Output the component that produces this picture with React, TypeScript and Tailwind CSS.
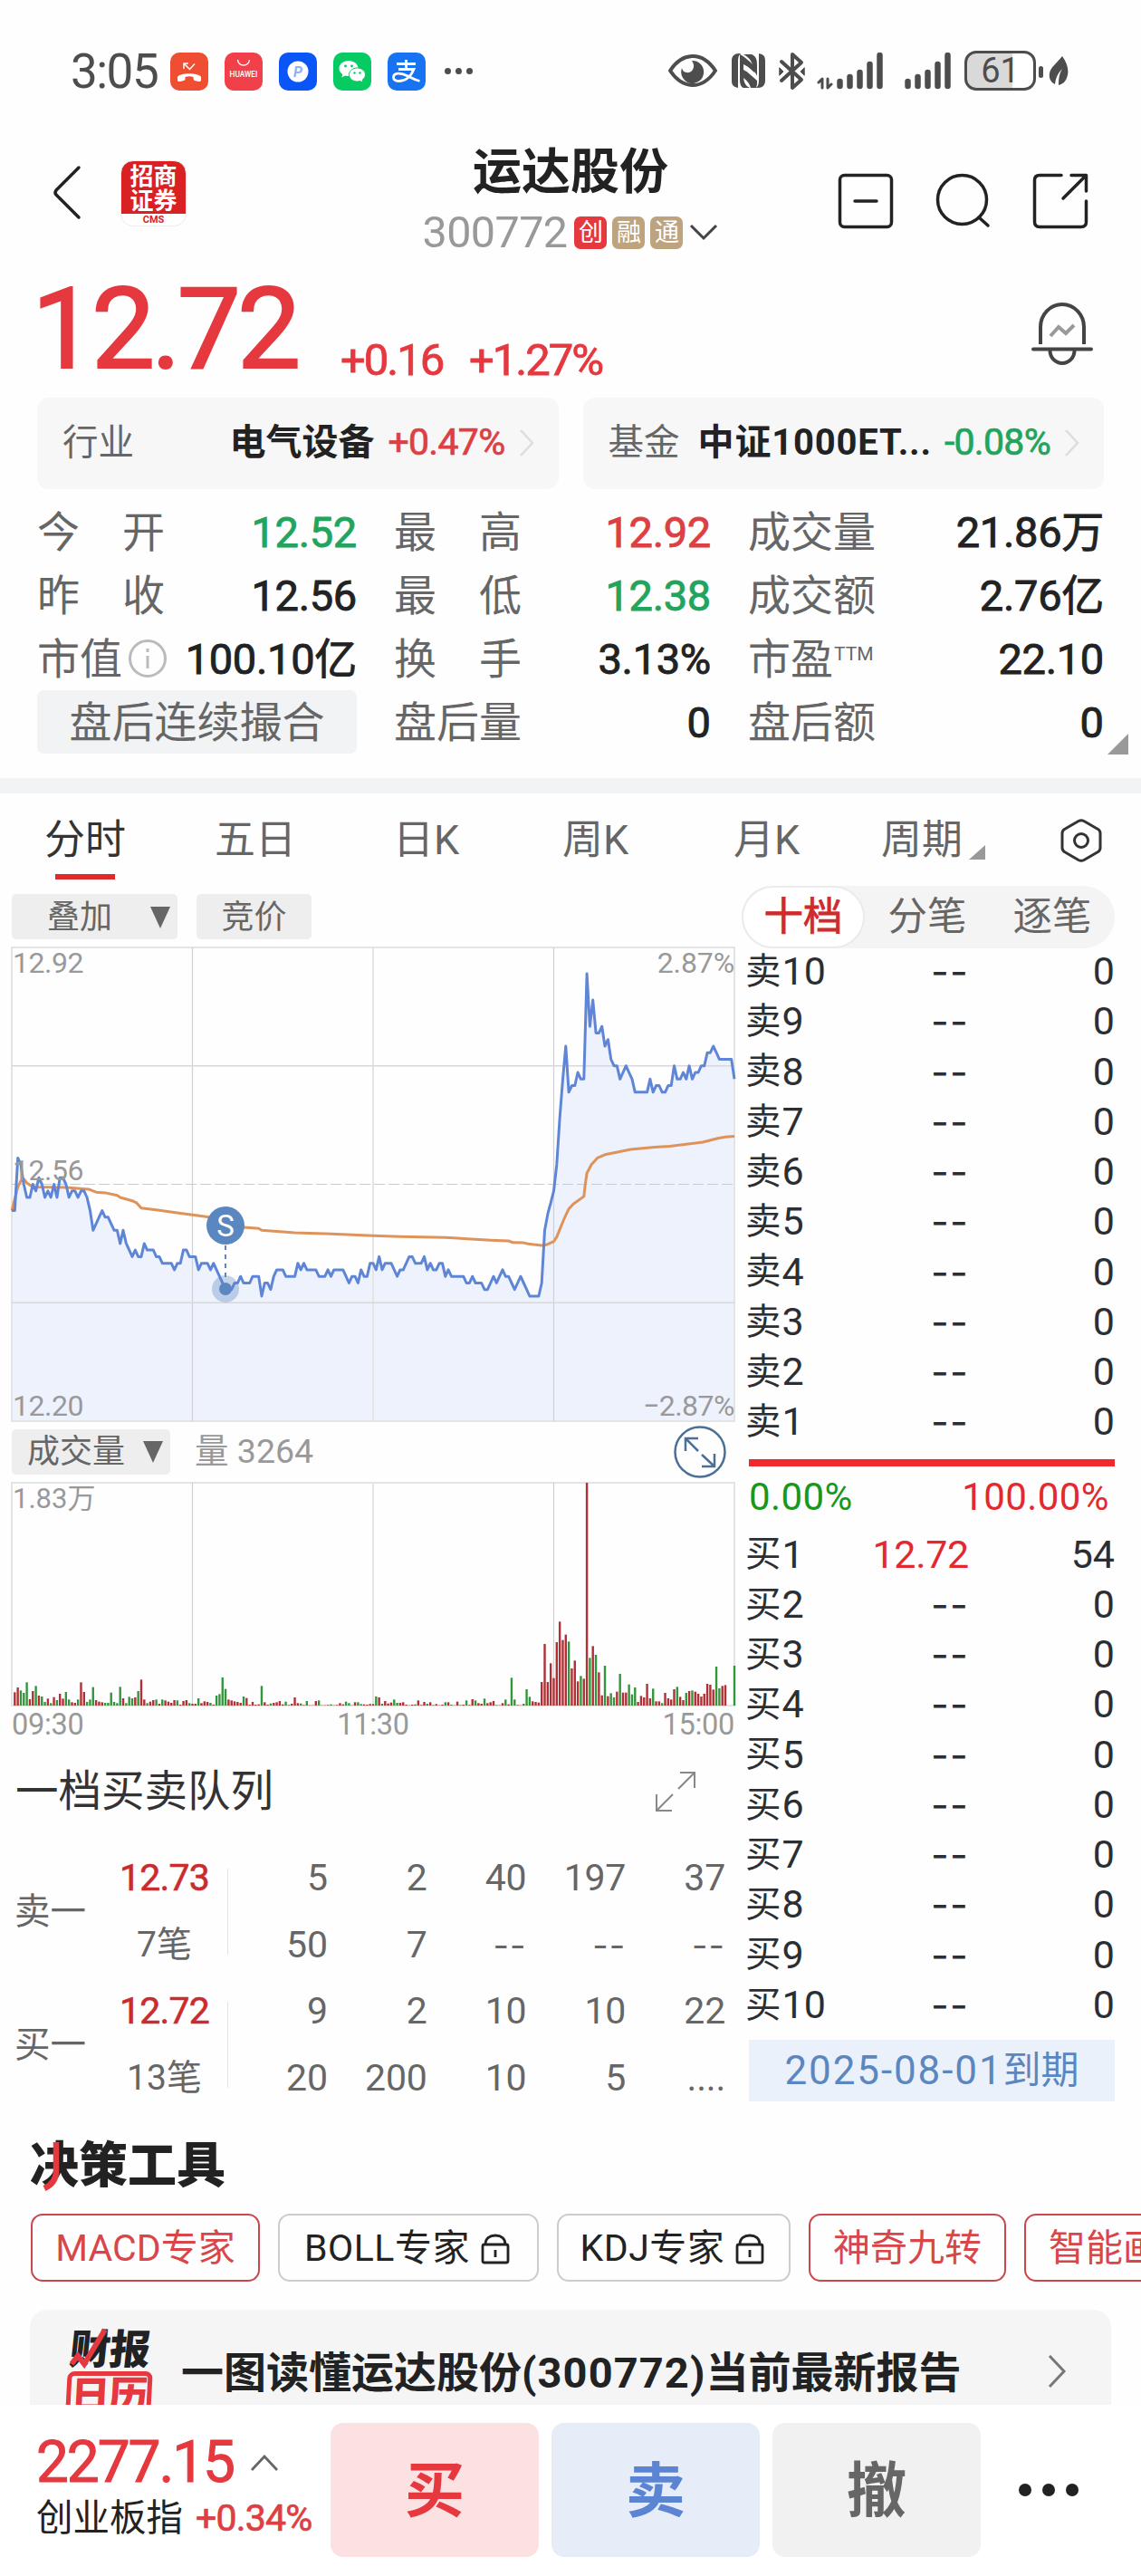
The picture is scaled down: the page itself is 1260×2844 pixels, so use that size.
import type { ReactNode } from 'react'
import clsx from 'clsx'

const TICK = 7.264
const STEP = 798 / 240
const MID = 261.5

// minute prices, in cents away from the previous close (12.56)
const prices = [
  -4, -4, 4, 3, 0, -2, -2, 0, -1, 1, 0, -2, -1, -2, 0, -2, 1, 1, 0, -2,
  -1, -1, -2, -1, -1, -2, -4, -7, -6, -5, -4, -5, -5, -6, -7, -7, -9, -7, -9, -10,
  -11, -10, -11, -11, -9, -10, -10, -10, -11, -11, -12, -12, -12, -12, -13, -12, -12, -10, -10, -11,
  -11, -11, -13, -12, -12, -12, -13, -12, -13, -14, -15, -16, -16, -16, -15, -15, -14, -15, -15, -15,
  -14, -14, -14, -17, -15, -15, -16, -14, -13, -13, -13, -14, -14, -14, -14, -12, -13, -12, -13, -13,
  -13, -13, -14, -14, -14, -13, -14, -13, -13, -13, -13, -14, -15, -14, -14, -15, -13, -14, -14, -12,
  -12, -13, -11, -13, -12, -12, -12, -13, -14, -13, -13, -12, -11, -11, -12, -12, -12, -11, -13, -12,
  -13, -13, -12, -12, -14, -13, -14, -14, -14, -14, -14, -15, -15, -14, -15, -15, -15, -16, -16, -15,
  -14, -15, -14, -13, -14, -14, -15, -16, -15, -14, -15, -16, -17, -17, -17, -17, -15, -7, -4.5, -2.8,
  -1, 3, 10, 16, 21, 14, 15, 15, 17, 16, 16, 32, 24, 28, 23, 23, 24, 21, 22, 19,
  18, 18, 16, 17, 18, 17, 16, 14, 14, 14, 14, 14, 16, 14, 15, 15, 14, 14, 15, 15,
  18, 16, 16, 17, 16, 18, 16, 17, 17, 18, 18, 20, 20, 21, 20, 19, 19, 19, 19, 19,
  16,
]

// [minute, cents] of the running average
const average: [number, number][] = [
  [0, -4], [2, -0.4], [3, 0.5], [4, 0.8], [5, 0.2], [7, -0.4], [18, -0.5], [25.5, -0.75], [28, -1.2],
  [31, -1.3], [35, -1.7], [36, -2], [40, -2.5], [41.5, -2.85], [43, -3.6], [48, -3.9], [56, -4.4],
  [60, -4.65], [65, -4.95], [77, -6.55], [82, -6.7], [83, -7], [94, -7.35], [106, -7.55], [120, -7.8],
  [129, -7.95], [144, -8.1], [159, -8.5], [165, -8.6], [166.5, -8.85], [170, -8.9], [171.5, -9.05],
  [176, -9.3], [177.5, -9.2], [180, -8.7], [181, -8], [183.5, -5.2], [185, -3.75], [186.5, -3],
  [190, -1.85], [190.4, -0.2], [191, 1.7], [192.5, 3], [194.5, 4], [197, 4.5], [205.5, 5.3],
  [213.5, 5.65], [218.5, 5.8], [229.5, 6.4], [234.5, 7], [237, 7.2], [240, 7.3],
]

// volume per minute: positive is an up minute, negative a down minute
const volumes = [
  44, 60, -50, -42, -77, 21, 48, -65, 33, -30, -12, 23, -8, 28, -18, 39, 23, -45, -20, 11,
  9, -20, 77, 45, -12, -20, -61, 18, 13, 11, -9, -9, -43, -12, -8, -62, 24, -8, -29, -24,
  27, -48, 86, 20, -8, 13, 18, -20, 6, -20, 17, 13, 9, 18, -17, 3, 15, 18, -8, 6,
  6, -24, 8, 14, 12, -9, 3, -33, -38, -93, -55, 20, 17, 14, 12, 9, -30, 25, 3, 12,
  3, 4, -65, 11, 3, -7, 9, 11, 15, 4, -13, 2, 6, 27, 8, -7, 2, -15, 1, 1,
  15, -17, 1, 1, 2, -4, 1, 2, 8, 4, -13, -8, 1, 11, -11, -5, 4, 3, 5, 5,
  -30, 27, -6, 15, 7, 10, -20, -9, 9, 11, 3, 1, 3, -4, 17, 2, 12, -6, 11, -2,
  5, 1, 3, -11, 11, -3, 1, 13, -2, 3, -17, 2, 21, -17, 8, 6, -23, 8, 11, 15,
  -2, 1, 8, -20, 4, -92, -20, 2, 1, -6, -54, -29, 14, 12, 10, 78, 204, 78, 140, 91,
  210, 278, 217, 235, -212, 123, 149, 80, -98, 89, 738, -158, 197, -168, 110, 34, -132, 31, -41, -27,
  46, -105, 43, 43, -70, -37, -60, 12, 32, 27, 72, 24, -56, 14, 14, -8, 42, 24, 20, 54,
  -62, 29, 18, -42, 48, -50, 46, 39, 30, 39, 72, 69, 53, -129, -57, 65, 68, 0, 0, -132,
]

const px = (m: number) => (m * STEP).toFixed(1)
const py = (c: number) => (MID - c * TICK).toFixed(1)

const priceLine = prices.map((c, m) => `${px(m)},${py(c)}`).join(' ')
const averageLine = average.map(([m, c]) => `${px(m)},${py(c)}`).join(' ')

function StatusBar() {
  return (
    <div className="flex h-[142px] items-start pt-[58px] text-[#4d4d4d]">
      <div className="ml-[78px] w-[110px] text-[53px] leading-[43px] tracking-[-1.500px]">3:05</div>
      <div className="flex gap-[18px]">
        <svg width="42" height="42" viewBox="0 0 42 42">
          <rect width="42" height="42" rx="10" fill="#f04e32" />
          <path d="M8 30v-3c3-5 23-5 26 0v3c0 2-1 2-3 2l-4-1c-1-.5-1.500-1-1.500-4-3-1-6-1-9 0 0 3 0 3.500-1.500 4l-4 1c-2 0-3 0-3-2z" fill="#fff" />
          <path d="M15 18v-6h5M15.500 12.500l6 6 5.500-6" fill="none" stroke="#fff" strokeWidth="1.500" />
        </svg>
        <svg width="42" height="42" viewBox="0 0 42 42">
          <rect width="42" height="42" rx="10" fill="#f2404a" />
          <path d="M14.500 8c1 8 12 8 13 0" fill="none" stroke="#fff" strokeWidth="1.300" />
          <text x="21" y="27" textAnchor="middle" fontSize="8.300" fontWeight="500" fill="#fff">HUAWEI</text>
        </svg>
        <svg width="42" height="42" viewBox="0 0 42 42">
          <rect width="42" height="42" rx="10" fill="#0a55f5" />
          <circle cx="21" cy="21" r="11.500" fill="#fff" />
          <text x="21" y="27" textAnchor="middle" fontSize="16" fontWeight="700" fontStyle="italic" fill="#8fb0fa">P</text>
        </svg>
        <svg width="42" height="42" viewBox="0 0 42 42">
          <rect width="42" height="42" rx="10" fill="#06cb62" />
          <path d="M17 9C11 9 6.500 12.800 6.500 17.500c0 2.800 1.500 5 3.800 6.500l-1 3.500 3.800-2c1.200.4 2.500.6 3.900.6 5.800 0 10.500-3.800 10.500-8.600S22.800 9 17 9z" fill="#fff" />
          <path d="M26.500 17c-5 0-9 3.300-9 7.500s4 7.500 9 7.500c1.100 0 2.200-.2 3.200-.5l3.200 1.700-.8-2.900c2-1.400 3.400-3.500 3.400-5.800 0-4.200-4-7.500-9-7.500z" fill="#fff" stroke="#06cb62" strokeWidth="1" />
          <g fill="#06cb62">
            <circle cx="13.500" cy="15" r="1.400" />
            <circle cx="20.500" cy="15" r="1.400" />
            <circle cx="23.500" cy="22.500" r="1.200" />
            <circle cx="29.500" cy="22.500" r="1.200" />
          </g>
        </svg>
        <svg width="42" height="42" viewBox="0 0 42 42">
          <rect width="42" height="42" rx="10" fill="#1773f2" />
          <g fill="none" stroke="#fff" strokeWidth="2.800">
            <path d="M20.500 8v10M10 12.500h21M12 18.500h17c-2 5-7 13-16 13-4 0-6.500-1.500-6.500-4 0-6 9-5 16-1.500 5 2.500 8 4.500 13 5.500" />
          </g>
        </svg>
      </div>
      <div className="mt-[17px] ml-[21px] flex gap-[5px]">
        <i className="size-[7px] rounded-full bg-[#4d4d4d]" />
        <i className="size-[7px] rounded-full bg-[#4d4d4d]" />
        <i className="size-[7px] rounded-full bg-[#4d4d4d]" />
      </div>

      <div className="mr-[80px] ml-auto flex items-center">
        <svg width="54" height="42" viewBox="0 0 54 42">
          <path d="M2 20C10 8 18 4 27 4s17 4 25 16c-8 12-16 16-25 16S10 32 2 20z" fill="none" stroke="#4d4d4d" strokeWidth="4" strokeLinejoin="round" />
          <path d="M26 9a12.500 12.500 0 1 1-11 8c1 6 9 7 12 2 2-4 1-7-1-10z" fill="#4d4d4d" />
        </svg>
        <svg className="ml-[16px]" width="37" height="42" viewBox="0 0 37 42">
          <path d="M8 1h2C7.500 3 7 6 7 10v29C2 38 0 36 0 31V9c0-5 3-8 8-8zM29 39h-2c2.500-2 3-5 3-9V1c5 1 7 3 7 8v22c0 5-3 8-8 8z" fill="#4d4d4d" />
          <path d="M9 2c5 2 13 10 16 13v7C20 17 16 14 13 13v13c0 6 2 11 7 13h-7c-3-1-4-5-4-9z" fill="#4d4d4d" />
          <path d="M13 19c6 3 10 8 15 12v4l-1 4h-6c-1-4-3-7-8-11zM13 2h9c5 2 6 6 6 12v12c-1-3-3-5-5-7 1-8-3-13-10-17z" fill="#4d4d4d" />
        </svg>
        <svg className="ml-[15px]" width="29" height="42" viewBox="0 0 29 42" fill="none" stroke="#4d4d4d" strokeWidth="4" strokeLinejoin="round" strokeLinecap="round">
          <path d="M3 10l22 20-10 9V2l10 9L3 31" />
          <path d="M1 17l4 4-4 4zM28 17l-4 4 4 4z" fill="#4d4d4d" strokeWidth="1" />
        </svg>
        <svg className="ml-[13px]" width="74" height="42" viewBox="0 0 74 42" stroke="#4d4d4d" strokeLinecap="round" fill="none">
          <path d="M6 39V29l-4 4M12 29v10l4-4" strokeWidth="3" strokeLinejoin="round" />
          <path d="M25.500 32v5M36.500 27v10M47.500 22v15M58.500 13v24M69.500 3v34" strokeWidth="6.500" />
        </svg>
        <svg className="ml-[23px]" width="52" height="42" viewBox="0 0 52 42" stroke="#4d4d4d" strokeLinecap="round" fill="none">
          <path d="M3.500 32v5M14.500 27v10M25.500 22v15M36.500 13v24M47.500 3v34" strokeWidth="6.500" />
        </svg>
        <div className="-mt-[2px] ml-[14px] flex h-[44px] w-[79px] items-center justify-center rounded-[13px] border-[3.500px] border-[#4d4d4d] bg-[linear-gradient(90deg,#d9d9d9_68%,#fff_68%)] text-[38px] leading-none">
          61
        </div>
        <i className="ml-[3px] h-[13px] w-[5px] rounded-full bg-[#4d4d4d]" />
        <svg className="ml-[6px]" width="22" height="36" viewBox="0 0 22 36">
          <path d="M15 1c6 8 8 17 5 24-2 5-5 7-9 8 0-8 1-13 4-18-5 5-7 10-8 17-4-2-7-6-6-12C2 13 9 9 15 1z" fill="#4d4d4d" />
        </svg>
      </div>
    </div>
  )
}

const badges = [
  { text: '创', color: 'bg-[#e5383f]' },
  { text: '融', color: 'bg-[#bda47f]' },
  { text: '通', color: 'bg-[#bda47f]' },
]

function Header() {
  return (
    <header className="flex h-[150px] items-start">
      <svg className="mt-[40px] ml-[57px]" width="34" height="62" viewBox="0 0 34 62" fill="none" stroke="#222" strokeWidth="3.500" strokeLinecap="round" strokeLinejoin="round">
        <path d="M30 3L5 28q-2 3 0 5L30 58" />
      </svg>
      <div className="mt-[35px] ml-[42px] flex h-[73px] w-[73px] flex-col items-center rounded-[14px] border border-[#ececec] bg-[linear-gradient(#d92124_82%,#fff_82%)] font-bold">
        <div className="mt-[4px] h-[27px] text-[26px] leading-[27px] text-white">招商</div>
        <div className="h-[28px] text-[26px] leading-[27px] text-white">证券</div>
        <div className="h-[12px] text-[11px] leading-[12px] text-[#d92124]">CMS</div>
      </div>
      <div className="ml-[260px] flex w-[328px] flex-col items-center">
        <h1 className="mt-[21px] text-[54px] leading-[56px] font-bold text-[#222]">运达股份</h1>
        <div className="mt-[14px] flex h-[48px] items-center">
          <span className="text-[48.500px] leading-none tracking-[-0.600px] text-[#999]">300772</span>
          <div className="ml-[8px] flex gap-[6px]">
            {badges.map((b) => (
              <span key={b.text} className={clsx('flex size-[36px] items-center justify-center rounded-[7px] text-[27px] leading-none text-white', b.color)}>
                {b.text}
              </span>
            ))}
          </div>
          <svg className="ml-[7px]" width="32" height="20" viewBox="0 0 32 20" fill="none" stroke="#444" strokeWidth="3">
            <path d="M2 2l14 14L30 2" />
          </svg>
        </div>
      </div>
      <svg className="mt-[49px] ml-[131px]" width="62" height="62" viewBox="0 0 62 62" fill="none" stroke="#222" strokeWidth="3.500" strokeLinecap="round">
        <rect x="2.500" y="2.500" width="57" height="57" rx="5" />
        <path d="M19 31h24" />
      </svg>
      <svg className="mt-[49px] ml-[45px]" width="62" height="62" viewBox="0 0 62 62" fill="none" stroke="#222" strokeWidth="3.500" strokeLinecap="round">
        <circle cx="30.500" cy="29.500" r="27" />
        <path d="M49 49l10 9" />
      </svg>
      <svg className="mt-[49px] ml-[46px]" width="62" height="62" viewBox="0 0 62 62" fill="none" stroke="#222" strokeWidth="3.500" strokeLinecap="round" strokeLinejoin="round">
        <path d="M32 2.500H8q-5.500 0-5.500 5.500v46q0 5.500 5.500 5.500h46q5.500 0 5.500-5.500V31M43 2.500h16.500V20M59 3L34 28" />
      </svg>
    </header>
  )
}

function PriceRow() {
  return (
    <div className="flex h-[147px] items-start text-[#e5383f]">
      <div className="mt-[8px] ml-[35px] w-[341px] text-[125px] leading-[128px] tracking-[-4.200px] [-webkit-text-stroke:2px]">12.72</div>
      <div className="mt-[81px] w-[142px] text-[49px] leading-none tracking-[-2px] [-webkit-text-stroke:0.8px]">+0.16</div>
      <div className="mt-[81px] text-[49px] leading-none tracking-[-2px] [-webkit-text-stroke:0.8px]">+1.27%</div>
      <svg className="mt-[42px] mr-[53px] ml-auto" width="68" height="70" viewBox="0 0 68 70" fill="none" stroke="#444" strokeWidth="4">
        <path d="M10 46V27a24 25 0 0 1 48 0v19M20.500 53a13.500 14 0 0 0 27 0" />
        <path d="M2 51.500h64" strokeLinecap="round" />
        <path d="M21 37l9-10 8 7 9-9" stroke="#999" />
      </svg>
    </div>
  )
}

interface RelatedProps {
  label: string
  name: string
  change: string
  down?: boolean
}

function Related({ label, name, change, down = false }: RelatedProps) {
  return (
    <div className="flex h-[101px] flex-1 items-center rounded-[13px] bg-[#f7f7f7] pr-[26px] pb-[2px] pl-[28px] leading-none">
      <span className="text-[39.500px] text-[#666]">{label}</span>
      <span className={clsx('ml-auto text-[40px] font-bold text-[#222]', down && 'tracking-[0.800px]')}>{name}</span>
      <span
        className={clsx(
          'text-[41px] tracking-[-0.700px] [-webkit-text-stroke:0.7px]',
          down ? 'ml-[14px] text-[#22a45d]' : 'ml-[15px] text-[#dc4044]',
        )}
      >
        {change}
      </span>
      <svg className="ml-[15px]" width="18" height="30" viewBox="0 0 18 30" fill="none" stroke="#ddd" strokeWidth="2.500">
        <path d="M2 1l13 14L2 29" />
      </svg>
    </div>
  )
}

const quotes: [string, string, string][] = [
  ['今开', '12.52', 'text-[#22a45d]'],
  ['最高', '12.92', 'text-[#dc4044]'],
  ['成交量', '21.86万', 'text-[#222]'],
  ['昨收', '12.56', 'text-[#222]'],
  ['最低', '12.38', 'text-[#22a45d]'],
  ['成交额', '2.76亿', 'text-[#222]'],
  ['市值', '100.10亿', 'text-[#222]'],
  ['换手', '3.13%', 'text-[#222]'],
  ['市盈', '22.10', 'text-[#222]'],
]

function QuoteLabel({ text }: { text: string }) {
  if (text === '市值') {
    return (
      <span className="flex items-center text-[#666]">
        市值
        <svg className="ml-[6px]" width="44" height="44" viewBox="0 0 44 44" fill="none" stroke="#bbb" strokeWidth="3">
          <circle cx="22" cy="22" r="19.500" />
          <path d="M22 19v14M22 11v4" />
        </svg>
      </span>
    )
  }
  if (text === '市盈') {
    return (
      <span className="flex text-[#666]">
        市盈<sup className="top-0 ml-[1px] pt-[8px] text-[21px] leading-none">TTM</sup>
      </span>
    )
  }
  return (
    <span className="flex w-[141px] justify-between text-[#666]">
      {[...text].map((c) => (
        <span key={c}>{c}</span>
      ))}
    </span>
  )
}

function Quotes() {
  return (
    <div className="relative h-[319px] pt-[12px] text-[47px] leading-none">
      <div className="grid grid-cols-[353px_350px_393px] gap-x-[41px] pl-[41px]">
        {quotes.map(([label, value, color]) => (
          <div key={label} className="flex h-[70px] items-center justify-between">
            <QuoteLabel text={label} />
            <span className={clsx('tracking-[-0.300px] [-webkit-text-stroke:0.9px]', color)}>{value}</span>
          </div>
        ))}
        <div className="flex h-[70px] items-center justify-center rounded-[7px] bg-[#f2f3f5] text-[#666]">盘后连续撮合</div>
        <div className="flex h-[70px] items-center justify-between">
          <span className="text-[#666]">盘后量</span>
          <span className="text-[#222] [-webkit-text-stroke:0.9px]">0</span>
        </div>
        <div className="flex h-[70px] items-center justify-between">
          <span className="text-[#666]">盘后额</span>
          <span className="text-[#222] [-webkit-text-stroke:0.9px]">0</span>
        </div>
      </div>
      <svg className="absolute right-[14px] bottom-[26px]" width="23" height="23" viewBox="0 0 23 23">
        <path d="M23 0v23H0z" fill="#999" />
      </svg>
    </div>
  )
}

const periods = [
  { text: '五日', cls: 'w-[197px]' },
  { text: '日K', cls: 'w-[187px]' },
  { text: '周K', cls: 'w-[189px]' },
  { text: '月K', cls: 'w-[163px]' },
]

function PeriodTabs() {
  return (
    <div className="flex h-[102px] items-start pt-[28px] text-[45px] leading-[48px] text-[#666]">
      <div className="ml-[49px] w-[188px] text-[#333]">
        分时
        <i className="mt-[13px] ml-[12px] block h-[6px] w-[66px] bg-[#e02b2b]" />
      </div>
      {periods.map((p) => (
        <div key={p.text} className={p.cls}>
          {p.text}
        </div>
      ))}
      <div>周期</div>
      <svg className="mt-[29px] ml-[7px]" width="18" height="16" viewBox="0 0 18 16">
        <path d="M18 0v16H0z" fill="#999" />
      </svg>
      <svg className="mr-[42px] ml-auto" width="48" height="48" viewBox="0 0 48 48" fill="none" stroke="#333" strokeWidth="3" strokeLinejoin="round">
        <path d="M21 2.500q3-1.500 6 0l15.500 9q2.500 1.500 2.500 4.500v16q0 3-2.500 4.500l-15.500 9q-3 1.500-6 0l-15.500-9Q3 35 3 32V16q0-3 2.500-4.500z" />
        <circle cx="24" cy="24" r="7.500" />
      </svg>
    </div>
  )
}

function DownTriangle() {
  return (
    <svg width="22" height="24" viewBox="0 0 22 24">
      <path d="M0 0h22L11 24z" fill="#666" />
    </svg>
  )
}

function Grid({ height, children }: { height: number; children?: ReactNode }) {
  return (
    <g fill="none" stroke="#e3e4e6" strokeWidth="2">
      <path d={`M0 0H798V${height}H0zM399 0V${height}`} />
      <path d={`M199.500 0V${height}M598.500 0V${height}`} stroke="#cfd0d3" strokeWidth="1.200" />
      {children}
    </g>
  )
}

function PriceChart() {
  return (
    <svg className="mt-[9px] ml-[13px] block overflow-visible" width="798" height="523" viewBox="0 0 798 523">
      <polygon points={`0,523 ${priceLine} 798,523`} fill="#eef2fd" />
      <Grid height={523}>
        <path d="M0 130.700H798M0 392.300H798" stroke="#d6d8dc" strokeWidth="1.500" />
        <path d="M0 261.500H798" stroke="#c9cacc" strokeWidth="1.200" strokeDasharray="12 4" />
      </Grid>
      <polyline points={averageLine} fill="none" stroke="#de935a" strokeWidth="3" strokeLinejoin="round" />
      <polyline points={priceLine} fill="none" stroke="#5f86d6" strokeWidth="3" strokeLinejoin="round" />
      <g fill="#999" fontSize="32" letterSpacing="-0.500">
        <text x="1" y="28">12.92</text>
        <text x="1" y="257">12.56</text>
        <text x="1" y="517">12.20</text>
        <text x="798" y="28" textAnchor="end" letterSpacing="-0.100">2.87%</text>
        <text x="798" y="517" textAnchor="end">−2.87%</text>
      </g>
      <path d="M236 329V367" stroke="#5b87c0" strokeWidth="2" strokeDasharray="5 5" />
      <circle cx="236" cy="377" r="15" fill="#5b87c0" fillOpacity="0.350" />
      <circle cx="236" cy="377" r="7" fill="#5b87c0" />
      <circle cx="236" cy="307" r="21" fill="#5b87c0" />
      <text x="236" y="319" textAnchor="middle" fontSize="33" fill="#fff">S</text>
    </svg>
  )
}

function VolumeChart() {
  return (
    <svg className="mt-[9px] ml-[13px] block overflow-visible" width="798" height="246" viewBox="0 0 798 246">
      <Grid height={246} />
      <text x="1" y="28" fill="#999" fontSize="31">1.83万</text>
      {volumes.map((v, i) => (
        <rect
          key={i}
          x={(i + 1) * STEP - 1.2}
          y={246 - Math.abs(v) / 3}
          width="2.400"
          height={Math.abs(v) / 3}
          fill={v > 0 ? '#b03036' : '#33963c'}
        />
      ))}
    </svg>
  )
}

const queues = [
  { side: '卖一', price: '12.73', count: '7笔', rows: [['5', '2', '40', '197', '37'], ['50', '7', '--', '--', '--']] },
  { side: '买一', price: '12.72', count: '13笔', rows: [['9', '2', '10', '10', '22'], ['20', '200', '10', '5', '....']] },
]

function Queue() {
  return (
    <div className="text-[#666]">
      <div className="flex h-[121px] items-center justify-between pt-[5px] pr-[51px] pl-[17px]">
        <h2 className="text-[47.500px] leading-none text-[#333]">一档买卖队列</h2>
        <svg className="-mt-[2px]" width="44" height="44" viewBox="0 0 44 44" fill="none" stroke="#888" strokeWidth="2">
          <path d="M27 1h16v17M43 1L25 19M1 25v18h17M1 43l18-18" />
        </svg>
      </div>
      {queues.map((q) => (
        <div key={q.side} className="flex h-[147px] items-center text-[41px] leading-none">
          <div className="ml-[16px] w-[96px] text-[39.500px]">{q.side}</div>
          <div className="flex w-[139px] flex-col items-center">
            <div className="flex h-[73px] items-center tracking-[-0.800px] text-[#c92b2e] [-webkit-text-stroke:0.6px]">{q.price}</div>
            <div className="flex h-[74px] items-center text-[39px]">{q.count}</div>
          </div>
          <i className="h-[95px] w-px bg-[#e3e3e3]" />
          <div className="grid flex-1 grid-cols-5 pr-[18px]">
            {q.rows.flat().map((n, i) => (
              <span
                key={i}
                className={clsx('flex h-[73.500px] items-center justify-end', n === '--' ? "font-['Inter',sans-serif] text-[38px] tracking-[1px]" : 'tracking-[-0.200px]')}
              >
                {n}
              </span>
            ))}
          </div>
        </div>
      ))}
    </div>
  )
}

function Level({ side, level, price = '--', size = '0' }: { side: string; level: number; price?: string; size?: string }) {
  return (
    <div className="flex h-[55.250px] items-center text-[43px] leading-none text-[#2b2e33]">
      <span className="flex w-[130px] items-center pl-[4px]">
        <span className="text-[39.500px]">{side}</span>
        <span className="ml-[1px]">{level}</span>
      </span>
      {price === '--' ? (
        <span className="w-[121px] text-right font-['Inter',sans-serif] tracking-[1.200px]">--</span>
      ) : (
        <span className="w-[121px] text-right tracking-[-0.300px] text-[#e3292f]">{price}</span>
      )}
      <span className="ml-auto">{size}</span>
    </div>
  )
}

function OrderBook() {
  const levels = [10, 9, 8, 7, 6, 5, 4, 3, 2, 1]
  return (
    <div className="w-[412px]">
      <div className="flex h-[69px] items-center rounded-full bg-[#f4f4f4] text-[43.500px] leading-none text-[#666]">
        <div className="flex h-full w-[136px] items-center justify-center rounded-full border-2 border-[#ebebeb] bg-white text-[#cf2a2c] [-webkit-text-stroke:0.8px]">十档</div>
        <div className="w-[138px] text-center">分笔</div>
        <div className="w-[138px] text-center">逐笔</div>
      </div>
      <div className="-mt-[2px]">
        {levels.map((n) => (
          <Level key={n} side="卖" level={n} />
        ))}
      </div>
      <div className="mt-[13px] ml-[8px] h-[8px] bg-[#f02a2b]" />
      <div className="flex h-[70px] items-center justify-between pr-[6px] pb-[1px] pl-[8px] text-[42px] leading-none tracking-[0.400px]">
        <span className="text-[#16981b]">0.00%</span>
        <span className="text-[#e3292f]">100.00%</span>
      </div>
      <div>
        <Level side="买" level={1} price="12.72" size="54" />
        {[2, 3, 4, 5, 6, 7, 8, 9, 10].map((n) => (
          <Level key={n} side="买" level={n} />
        ))}
      </div>
      <div className="mt-[11px] ml-[8px] flex h-[68px] items-center justify-center bg-[#ebf1fb] text-[42px] leading-none text-[#5b87c0]">
        <span className="text-[44px] tracking-[1.900px]">2025-08-01</span>到期
      </div>
    </div>
  )
}

function Lock() {
  return (
    <svg className="ml-[12px]" width="32" height="34" viewBox="0 0 32 34" fill="none" stroke="#222" strokeWidth="2.800">
      <rect x="2" y="12" width="28" height="20" rx="2" />
      <path d="M5 12C5 5 10 2 16 2s11 3 11 10M16 18v8" />
    </svg>
  )
}

const tools = [
  { text: 'MACD专家', active: true, cls: 'w-[253px]' },
  { text: 'BOLL专家', active: false, cls: 'w-[288px] pr-[3px] tracking-[0.500px]' },
  { text: 'KDJ专家', active: false, cls: 'w-[258px] pr-[3px] tracking-[0.500px]' },
  { text: '神奇九转', active: true, cls: 'w-[218px]' },
  { text: '智能画线', active: true, cls: 'w-[218px]' },
]

function Tools() {
  return (
    <section className="h-[333px] overflow-hidden">
      <div className="relative ml-[33px] h-[122px] pt-[42px]">
        <h2 className="text-[54px] leading-[56px] font-black text-[#222]">决策工具</h2>
        <svg className="absolute top-[43px] left-[11px]" width="24" height="54" viewBox="0 0 24 54" fill="none" stroke="#e5383f" strokeWidth="6.500">
          <path d="M18 0v32q0 13-13 19" />
        </svg>
      </div>
      <div className="flex gap-[20px] pl-[34px] whitespace-nowrap">
        {tools.map((t) => (
          <div
            key={t.text}
            className={clsx(
              'flex h-[75px] shrink-0 items-center justify-center rounded-[13px] border-2 pt-[2px] text-[41px] leading-none',
              t.active ? 'border-[#c9484c] text-[#d9464a]' : 'border-[#ccc] text-[#222]',
              t.cls,
            )}
          >
            {t.text}
            {!t.active && <Lock />}
          </div>
        ))}
      </div>
      <div className="mx-[33px] mt-[31px] flex h-[136px] rounded-[20px] bg-[#f5f5f5]">
        <div className="relative ml-[40px] w-[94px] pt-[24px] font-black">
          <div className="-skew-x-6 pl-[4px] text-[45px] leading-[42px] tracking-[-1px] text-[#222]">财报</div>
          <div className="mt-[2px] h-[64px] -skew-x-3 rounded-t-[8px] border-[5px] border-[#e5383f] text-center text-[43px] leading-[44px] tracking-[-1px] text-[#e5383f]">日历</div>
          <svg className="absolute top-[20px] left-[4px]" width="50" height="46" viewBox="0 0 50 46" fill="none" stroke="#e5383f" strokeWidth="6">
            <path d="M2 40l7-9 7 9L39 2" />
          </svg>
        </div>
        <div className="mt-[46px] ml-[33px] text-[47px] leading-none font-bold whitespace-nowrap text-[#222]">
          一图读懂运达股份<span className="tracking-[1.100px]">(300772)</span>当前最新报告
        </div>
        <svg className="mt-[50px] mr-[49px] ml-auto" width="21" height="36" viewBox="0 0 21 36" fill="none" stroke="#777" strokeWidth="3">
          <path d="M2 1l16 17L2 35" />
        </svg>
      </div>
    </section>
  )
}

const actions = [
  { text: '买', cls: 'bg-[#fce1e3] text-[#e5383f]' },
  { text: '卖', cls: 'bg-[#e6edf9] text-[#5b84d3]' },
  { text: '撤', cls: 'bg-[#f1f1f1] text-[#666]' },
]

function Footer() {
  return (
    <footer className="flex h-[189px] items-start bg-white pt-[20px] leading-none">
      <div className="ml-[40px] w-[325px]">
        <div className="mt-[12px] flex items-center">
          <span className="text-[64px] tracking-[-2.100px] text-[#e5383f] [-webkit-text-stroke:1px]">2277.15</span>
          <svg className="ml-[18px]" width="32" height="18" viewBox="0 0 32 18" fill="none" stroke="#666" strokeWidth="2.800">
            <path d="M2 17L16 2l14 15" />
          </svg>
        </div>
        <div className="mt-[9px] flex items-center whitespace-nowrap">
          <span className="text-[40.500px] text-[#222]">创业板指</span>
          <span className="ml-[14px] text-[41px] tracking-[-0.800px] text-[#dc4044] [-webkit-text-stroke:0.7px]">+0.34%</span>
        </div>
      </div>
      <div className="flex gap-[14px]">
        {actions.map((a) => (
          <div key={a.text} className={clsx('flex h-[148px] w-[230px] items-center justify-center rounded-[14px] pt-[4px] text-[66px] font-bold', a.cls)}>
            {a.text}
          </div>
        ))}
      </div>
      <div className="mt-[67px] ml-[42px] flex gap-[12px]">
        <i className="size-[14px] rounded-full bg-[#222]" />
        <i className="size-[14px] rounded-full bg-[#222]" />
        <i className="size-[14px] rounded-full bg-[#222]" />
      </div>
    </footer>
  )
}

export default function App() {
  return (
    <div className="h-[2844px] w-[1260px] overflow-hidden bg-[#fefefe] font-['Roboto','Noto_Sans_CJK_SC',sans-serif]">
      <StatusBar />
      <Header />
      <PriceRow />
      <div className="flex gap-[27px] pr-[41px] pl-[41px]">
        <Related label="行业" name="电气设备" change="+0.47%" />
        <Related label="基金" name="中证1000ET..." change="-0.08%" down />
      </div>
      <Quotes />
      <div className="h-[17px] bg-[#f2f3f5]" />
      <PeriodTabs />

      <main className="flex h-[1344px]">
        <div className="w-[819px] pt-[9px]">
          <div className="flex h-[50px] gap-[21px] pl-[13px] text-[36px] leading-none text-[#666]">
            <div className="flex w-[183px] items-center justify-between rounded-[5px] bg-[#eee] pt-[2px] pr-[8px] pl-[39px]">
              叠加
              <DownTriangle />
            </div>
            <div className="flex w-[127px] items-center justify-center rounded-[5px] bg-[#eee] pt-[2px]">竞价</div>
          </div>
          <PriceChart />
          <div className="mt-[8px] flex h-[51px] items-center pl-[13px] text-[36px] leading-none">
            <div className="flex h-[50px] w-[175px] items-center justify-between rounded-[5px] bg-[#eee] pt-[1px] pr-[8px] pl-[17px] text-[#666]">
              成交量
              <DownTriangle />
            </div>
            <span className="ml-[27px] pt-[1px] text-[37.500px] text-[#999]">量 3264</span>
            <svg className="mr-[17px] ml-auto shrink-0" width="58" height="58" viewBox="0 0 58 58" fill="none" stroke="#4b6f95" strokeWidth="2.500">
              <circle cx="29" cy="29" r="27.500" />
              <path d="M13 28V14h14M13 14l14 14M45 31v14H31M45 45L31 32" />
            </svg>
          </div>
          <VolumeChart />
          <div className="flex h-[45px] items-center justify-between pr-[8px] pb-[2px] pl-[13px] text-[32.500px] leading-none tracking-[-0.300px] text-[#999]">
            <span>09:30</span>
            <span>11:30</span>
            <span>15:00</span>
          </div>
          <div className="-mt-[12px]">
            <Queue />
          </div>
        </div>
        <OrderBook />
      </main>

      <Tools />
      <Footer />
    </div>
  )
}
